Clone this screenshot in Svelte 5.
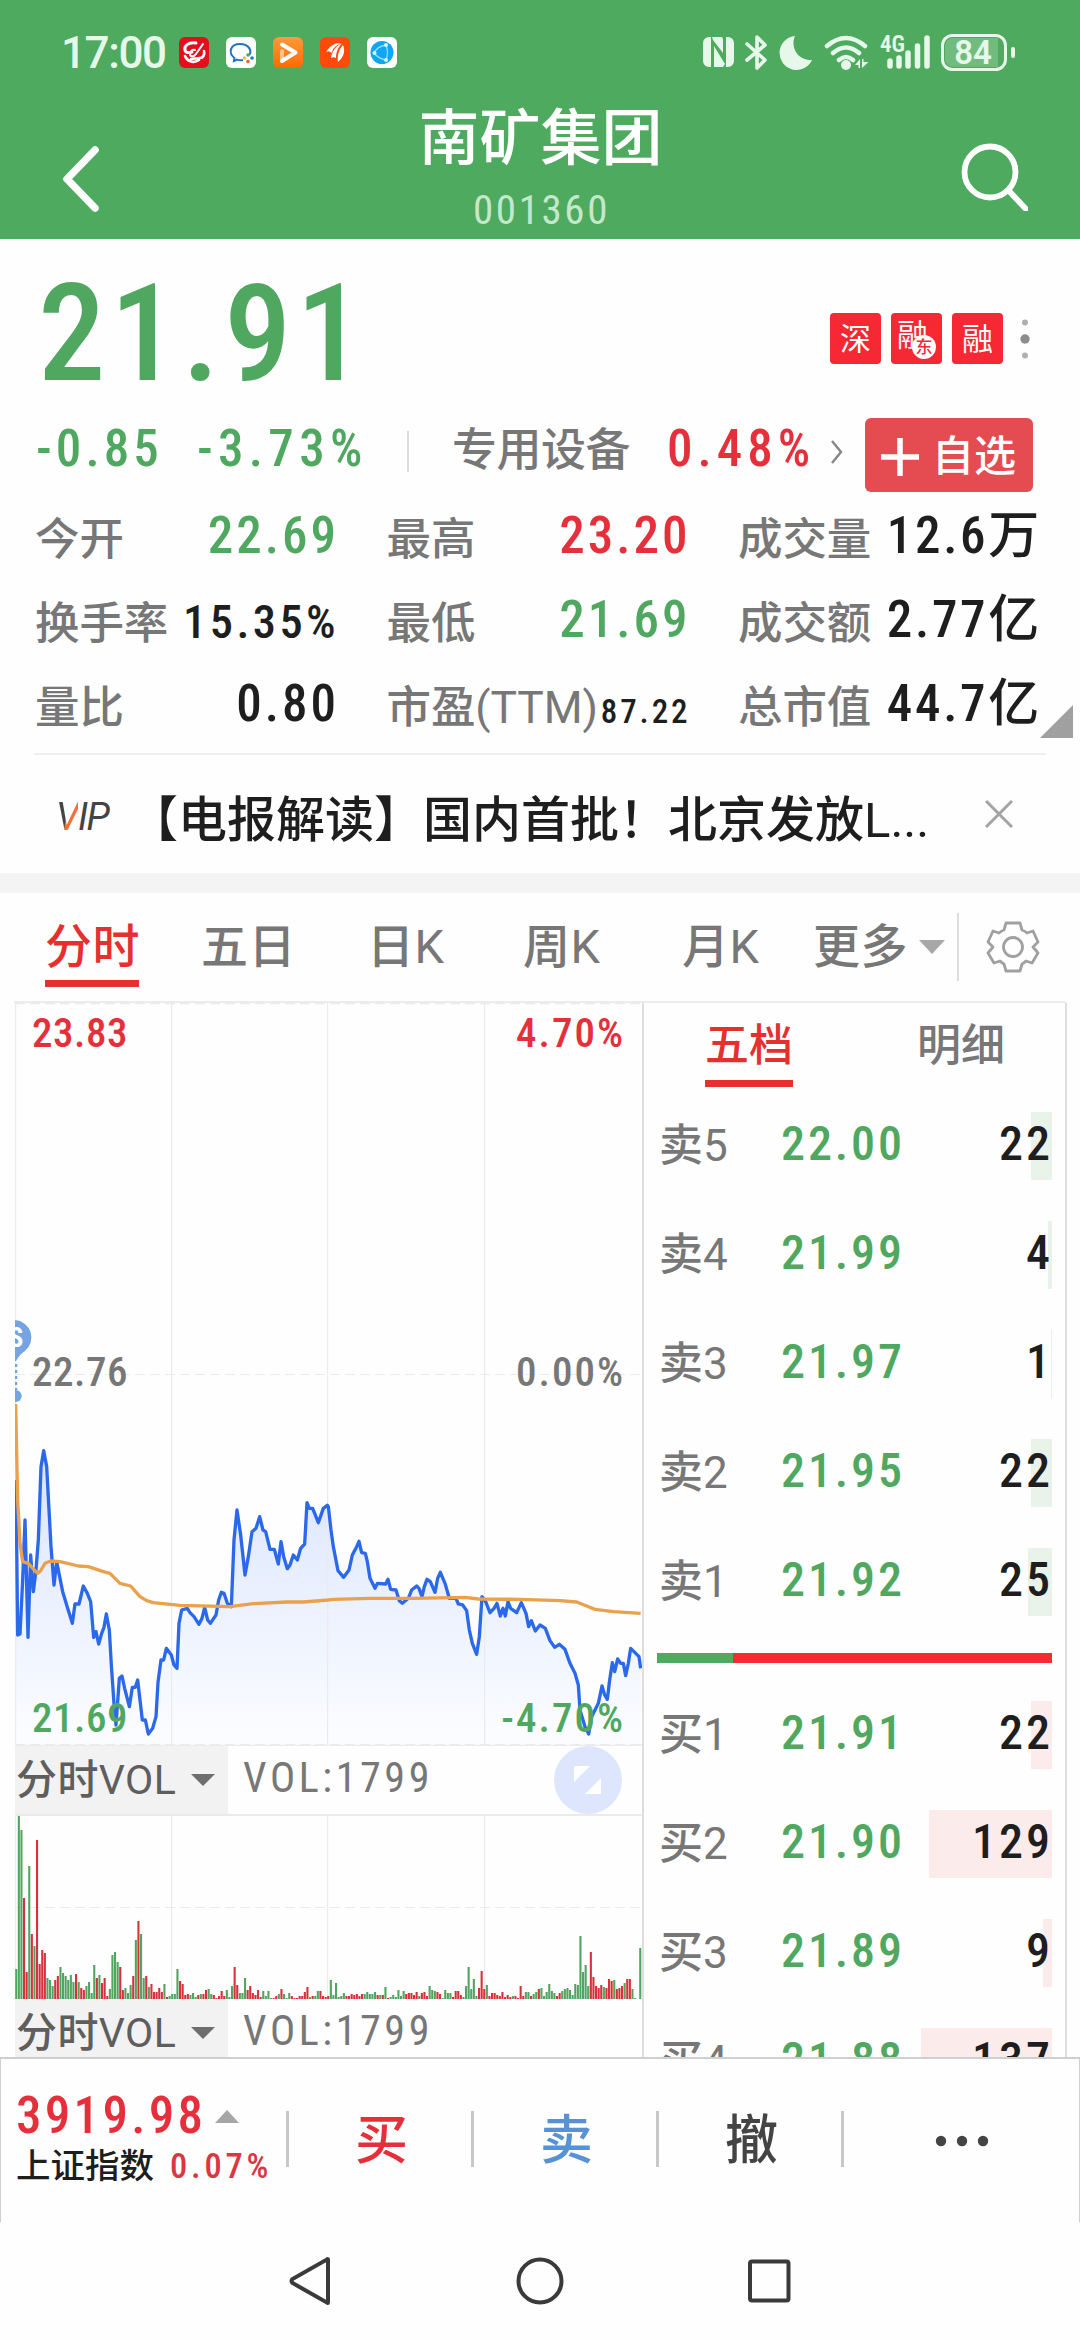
<script lang="ts">
	type Tone = 'up' | 'down' | 'plain';

	interface Stat {
		label: string;
		value: string;
		tone: Tone;
		size?: 'mid' | 'small';
	}

	interface Level {
		name: string;
		price: string;
		volume: number;
	}

	const stats: Stat[] = [
		{ label: '今开', value: '22.69', tone: 'down' },
		{ label: '最高', value: '23.20', tone: 'up' },
		{ label: '成交量', value: '12.6万', tone: 'plain' },
		{ label: '换手率', value: '15.35%', tone: 'plain', size: 'mid' },
		{ label: '最低', value: '21.69', tone: 'down' },
		{ label: '成交额', value: '2.77亿', tone: 'plain' },
		{ label: '量比', value: '0.80', tone: 'plain' },
		{ label: '市盈(TTM)', value: '87.22', tone: 'plain', size: 'small' },
		{ label: '总市值', value: '44.7亿', tone: 'plain' }
	];

	const tabs = ['分时', '五日', '日K', '周K', '月K'];

	const sells: Level[] = [
		{ name: '卖5', price: '22.00', volume: 22 },
		{ name: '卖4', price: '21.99', volume: 4 },
		{ name: '卖3', price: '21.97', volume: 1 },
		{ name: '卖2', price: '21.95', volume: 22 },
		{ name: '卖1', price: '21.92', volume: 25 }
	];

	const buys: Level[] = [
		{ name: '买1', price: '21.91', volume: 22 },
		{ name: '买2', price: '21.90', volume: 129 },
		{ name: '买3', price: '21.89', volume: 9 },
		{ name: '买4', price: '21.88', volume: 137 }
	];

	const depthWidth = (volume: number) => Math.max(1, Math.round(volume * 0.955));

	// chart points, three units per css pixel
	const price =
		'48,600 53,1065 60,1062 68,900 75,720 84,1072 92,825 100,935 108,870 115,780 123,560 131,512 140,560 153,800 162,915 170,845 178,885 188,935 200,975 217,1030 225,972 237,972 250,918 262,940 272,965 281,1072 288,1055 296,1092 305,1060 312,1042 319,1002 328,1050 334,1155 342,1270 348,1335 358,1195 366,1188 374,1225 388,1280 397,1222 406,1222 413,1200 427,1320 436,1320 445,1362 458,1345 468,1310 474,1207 483,1140 491,1140 499,1105 514,1125 522,1155 531,1165 537,1030 545,990 562,985 570,998 582,1010 597,1033 606,1015 614,982 623,1020 631,1030 648,1005 656,960 664,937 672,940 682,970 694,980 702,780 711,690 722,765 735,885 745,830 756,755 768,745 779,710 789,750 797,755 810,808 823,808 835,852 843,785 851,830 862,866 870,855 880,825 892,840 902,805 914,792 921,668 928,685 938,685 955,728 970,685 982,676 985,680 993,750 1000,800 1014,872 1031,892 1047,870 1057,825 1070,800 1077,784 1085,818 1096,820 1102,845 1110,895 1125,925 1132,910 1157,912 1164,898 1172,928 1188,930 1198,962 1207,970 1225,955 1235,930 1250,918 1257,925 1266,950 1273,920 1281,898 1291,905 1305,937 1313,895 1321,877 1335,910 1348,955 1368,955 1375,972 1388,975 1400,992 1408,1050 1417,1090 1430,1123 1438,1070 1446,950 1457,965 1470,998 1482,985 1491,970 1501,1008 1509,985 1516,1008 1524,965 1532,985 1550,998 1564,968 1578,1000 1586,1040 1594,1022 1606,1053 1620,1035 1636,1045 1650,1082 1664,1102 1678,1093 1695,1108 1710,1150 1725,1180 1735,1215 1740,1290 1755,1340 1766,1362 1775,1310 1795,1270 1806,1218 1814,1245 1822,1258 1829,1200 1837,1148 1844,1175 1853,1137 1862,1150 1870,1150 1877,1187 1885,1150 1892,1105 1905,1118 1917,1130 1922,1165';
	const average =
		'47,372 50,520 53,660 60,790 68,845 85,850 100,867 113,880 122,872 135,850 152,843 180,845 235,858 265,860 310,875 330,880 360,910 392,918 420,950 440,962 460,968 540,976 690,980 760,971 860,966 910,966 985,960 1000,958 1110,955 1240,955 1395,952 1435,957 1560,958 1680,962 1730,966 1760,978 1785,988 1840,995 1922,1000';

	// one entry per minute: colour and height
	const minutes =
		'g30 g183 g169 r101 r27 g133 r65 g53 r159 r35 r49 r46 g21 g19 g13 r19 r23 g32 g26 g23 g19 g24 g17 r25 g17 r11 r9 g13 g17 g6 g34 r21 g24 r16 r21 r3 g10 g44 g47 g37 r32 r9 g11 g6 g14 r23 g59 r78 g65 g21 r23 g12 r15 r7 r7 r11 r7 g15 r2 g3 g5 g5 g30 r18 r15 r4 r5 g4 g6 g2 r4 g5 r5 r9 g10 g5 r4 r1 r3 r8 r3 g9 g2 g13 r32 r14 g6 g6 g21 r9 r13 r6 r4 r9 r2 g8 g3 g8 g1 r1 r3 g5 r10 g5 g1 g6 r3 r1 r1 r3 r3 r7 r12 g2 r3 g3 g8 r8 r3 r2 r3 g19 g4 g16 g2 g3 g6 r3 r3 r5 r4 r5 r3 r5 g5 g7 g5 g5 g7 r4 g4 r4 g12 r1 g2 g4 g2 g9 g3 g8 r5 r6 r6 r4 r7 g3 r6 r7 r3 g13 g9 g8 r7 r5 g1 g9 g6 g6 r2 r8 r8 r4 g2 g13 g32 g10 g20 g3 r11 r28 r10 g14 r3 r6 r6 r4 r3 r7 r2 r4 r2 g3 r3 r1 r13 r3 g7 g7 r3 g5 g7 r10 g11 g3 g7 g15 g8 g6 r3 r6 g8 g10 g11 g9 g4 g15 g14 g63 g27 g34 g13 r47 r22 r13 r11 r14 g12 r11 r20 r18 g19 r10 r11 r13 g16 r20 r20 g10 g1 g0 g51';
	const bars = minutes.split(' ').map((m, i) => ({
		x: i * 2.6,
		height: Number(m.slice(1)),
		rise: m[0] === 'r'
	}));
</script>

{#snippet level(row: Level, side: string)}
	<div class="level">
		<span class="level-name">{row.name}</span>
		<span class="level-price">{row.price}</span>
		<span class="level-volume">
			<i class="depth {side}" style="width: {depthWidth(row.volume)}px"></i>
			<b>{row.volume}</b>
		</span>
	</div>
{/snippet}

{#snippet indicator()}
	<div class="picker">
		<span>分时VOL</span>
		<svg width="24" height="12" viewBox="0 0 24 12"><path d="M0 0h24L12 12z" fill="#6e6e6e" /></svg>
	</div>
	<span class="reading">VOL:1799</span>
{/snippet}

<main class="screen">
	<header>
		<div class="status">
			<span class="clock">17:00</span>
			<div class="apps">
				<svg viewBox="0 0 30 31">
					<rect width="30" height="31" rx="6" fill="#e60e1c" />
					<g fill="none" stroke="#fff" stroke-linecap="round">
						<path d="M17 6C9 5 5 9 6 13c.6 3 4 3 7 2" stroke-width="3" />
						<path d="M24 7l-7 10c-2 3-6 3-6 0s3-5 5-4" stroke-width="2" />
						<path d="M25 14c1 4-1 7-4 7-3 1-7 0-9 1M6 19c2 5 8 8 14 4" stroke-width="2.6" />
					</g>
				</svg>
				<svg viewBox="0 0 30 31">
					<rect width="30" height="31" rx="6" fill="#fff" />
					<path d="M17 23c-2 .4-4 .3-6-.4L8 24l.4-3C2 16 4 7 14 7s12 8 9 11" fill="none" stroke="#1d75c3" stroke-width="2" />
					<circle cx="22" cy="18" r="1.8" fill="#4db04a" /><circle cx="26" cy="21" r="1.8" fill="#1d75c3" />
					<circle cx="22" cy="24.500" r="1.800" fill="#f0622d" /><circle cx="18.500" cy="21" r="1.800" fill="#f9c22d" />
				</svg>
				<svg viewBox="0 0 30 31">
					<defs><linearGradient id="play" x1="0" y1="0" x2="0" y2="1"><stop stop-color="#ff9a3c" /><stop offset="1" stop-color="#ff6a00" /></linearGradient></defs>
					<rect width="30" height="31" rx="6" fill="url(#play)" />
					<path d="M9 24V14" stroke="#ffc58e" stroke-width="4" stroke-linecap="round" />
					<path d="M9 7.500l13.500 8L9 24" fill="none" stroke="#fff" stroke-width="4" stroke-linecap="round" stroke-linejoin="round" />
				</svg>
				<svg viewBox="0 0 30 31">
					<rect width="30" height="31" rx="6" fill="#ff4a0b" />
					<path d="M6 15c4-6 8-9 15-9-6 3-9 6-9 10-3-2-4-2-6-1zM11 21c1-7 5-12 11-15-5 6-6 10-6 15-2-1-3-1-5 0zM18 25c-1-6 1-13 5-17 2 5 2 11-5 17z" fill="#fff" />
				</svg>
				<svg viewBox="0 0 30 31">
					<rect width="30" height="31" rx="6" fill="#fff" />
					<circle cx="15" cy="15.500" r="11.500" fill="#10a5f5" />
					<path d="M19 8C13 9 9 12 7 16c3 4 7 6 12 7 2-5 2-10 0-15z" fill="none" stroke="#8fe0ff" stroke-width="1.300" />
					<g fill="#d8f5ff"><circle cx="19" cy="8" r="2" /><circle cx="7.500" cy="16" r="2" /><circle cx="19" cy="23" r="2" /></g>
				</svg>
			</div>
			<svg class="signals" width="314" height="40" viewBox="0 0 314 40" fill="#e6f8e9">
				<path d="M7 5h2v30H7a6 6 0 0 1-6-6V11a6 6 0 0 1 6-6zM10 5h9q2 0 2 3v13L11 8zM24 5h2a6 6 0 0 1 6 6v18a6 6 0 0 1-6 6h-2zM12 14l11 18-2 3H12z" />
				<path d="M45 12l18 16-8 8V5l8 8-18 15" fill="none" stroke="#e6f8e9" stroke-width="3.600" stroke-linejoin="round" stroke-linecap="round" />
				<path d="M93 4A17 17 0 1 0 110 28 17 17 0 0 1 93 4z" />
				<g fill="none" stroke="#e6f8e9" stroke-width="4.500" stroke-linecap="round">
					<path d="M125 14q19-16 38 0M131 21q13-11 26 0M137 28q7-6 14 0" />
				</g>
				<circle cx="144" cy="33" r="5" />
				<path d="M153 33l5-6v9h-1.500v-3zM160 27h1.500v3h5l-6.500 6z" />
				<text x="178" y="20" class="net">4G</text>
				<g stroke="#e6f8e9" stroke-width="5.500" stroke-linecap="round">
					<path d="M188 29v5M197 26v8M206 21v13M215.500 14v20M225 6v28" />
				</g>
				<rect x="240.500" y="3.500" width="63" height="34" rx="10" fill="none" stroke="#e6f8e9" stroke-width="3" />
				<path d="M251 6h45v29h-45a8 8 0 0 1-8-8V14a8 8 0 0 1 8-8z" fill="#71bb7e" />
				<rect x="309" y="15" width="4" height="11" rx="2" />
				<text x="271" y="32" class="charge">84</text>
			</svg>
		</div>
		<div class="title-bar">
			<svg width="44" height="72" viewBox="0 0 44 72"><path d="M36 7L8 36l28 29" fill="none" stroke="#fff" stroke-width="7.500" stroke-linecap="round" stroke-linejoin="round" /></svg>
			<div class="title">
				<h1>南矿集团</h1>
				<span>001360</span>
			</div>
			<svg width="68" height="68" viewBox="0 0 68 68" fill="none" stroke="#fff" stroke-width="5.800" stroke-linecap="round"><circle cx="30" cy="29" r="25.500" /><path d="M49 48l17 18" /></svg>
		</div>
	</header>

	<section class="quote">
		<div class="last">
			<strong>21.91</strong>
			<div class="tags">
				<span>深</span>
				<span class="dual">融<em>东</em></span>
				<span>融</span>
				<svg width="10" height="42" viewBox="0 0 10 42"><circle cx="5" cy="4.500" r="3" fill="#b0b0b0" /><circle cx="5" cy="21" r="4.700" fill="#8c8c8c" /><circle cx="5" cy="37.500" r="3" fill="#b0b0b0" /></svg>
			</div>
		</div>
		<div class="change">
			<span class="num down diff">-0.85</span>
			<span class="num down percent">-3.73%</span>
			<i class="rule"></i>
			<span class="sector">专用设备</span>
			<span class="num up">0.48%</span>
			<svg class="chevron" width="14" height="28" viewBox="0 0 14 28"><path d="M2 3l9 11-9 11" fill="none" stroke="#888" stroke-width="2.500" /></svg>
			<button>
				<svg width="38" height="38" viewBox="0 0 38 38"><path d="M19 0v38M0 19h38" stroke="#fff" stroke-width="5.500" /></svg>
				自选
			</button>
		</div>
		<div class="stats">
			{#each stats as stat}
				<div class="stat">
					<span class="label">{stat.label}</span>
					<span class="value {stat.tone} {stat.size ?? ''}">{stat.value}</span>
				</div>
			{/each}
			<svg class="fold" width="33" height="33" viewBox="0 0 33 33"><path d="M33 0v33H0z" fill="#a0a0a0" /></svg>
		</div>
	</section>

	<section class="news">
		<span class="vip"><i>V</i>IP</span>
		<p>【电报解读】国内首批！北京发放L...</p>
		<svg width="28" height="28" viewBox="0 0 28 28"><path d="M1 1l26 26M27 1L1 27" stroke="#a4a4a4" stroke-width="3" /></svg>
	</section>

	<nav class="tabs">
		{#each tabs as tab, i}
			<span class="tab" class:active={i === 0}>{tab}</span>
		{/each}
		<span class="tab more">更多<svg width="26" height="14" viewBox="0 0 26 14"><path d="M0 0h26L13 14z" fill="#a8a8a8" /></svg></span>
		<svg class="gear" width="54" height="54" viewBox="-27 -27 54 54" fill="none" stroke="#a0a0a0" stroke-width="2.800" stroke-linejoin="round">
			<path d="M-7-24H7L9-17Q12-16 14-14L20-16 25-5 20 0 25 6 19 16 13 14Q11 16 9 17L7 24H-7L-9 17Q-11 16-13 14L-19 16-25 6-20 0-25-5-20-16-14-14Q-12-16-9-17z" />
			<circle r="9.500" />
		</svg>
	</nav>

	<div class="board">
		<div class="charts">
			<div class="trend">
				<svg width="627" height="743" viewBox="0 0 627 743">
					<defs>
						<linearGradient id="fill" x1="0" y1="0" x2="0" y2="1">
							<stop stop-color="#d9e4fd" /><stop offset="1" stop-color="#fcfdff" />
						</linearGradient>
					</defs>
					<g transform="translate(-15 277) scale(.33333)">
						<polygon points="48,1394 {price} 1922,1394" fill="url(#fill)" />
					</g>
					<g stroke="#ebebeb" stroke-width="1.200" fill="none">
						<path d="M.6 0v743M156.600 0v743M312.600 0v743M469.600 0v743" />
						<path d="M0 .6h627M0 371.500h627M0 741.500h627" stroke-dasharray="10 5" />
					</g>
					<g transform="translate(-15 277) scale(.33333)" fill="none" stroke-linejoin="round">
						<polyline points={price} stroke="#2c69ea" stroke-width="10" />
						<polyline points={average} stroke="#e9a14c" stroke-width="10" />
					</g>
					<g fill="#75a4e2">
						<path d="M0 317a17.500 17.500 0 0 1 10 31q-5 3-9 10H0z" />
						<path d="M1 361v26" stroke="#75a4e2" stroke-width="2.500" stroke-dasharray="3 3" />
						<circle cx=".7" cy="393" r="6" />
						<text x="1" y="344" class="mark">S</text>
					</g>
				</svg>
				<div class="scale">
					<div class="up"><span>23.83</span><span>4.70%</span></div>
					<div><span>22.76</span><span>0.00%</span></div>
					<div class="down"><span>21.69</span><span>-4.70%</span></div>
				</div>
			</div>
			<div class="indicator">
				{@render indicator()}
				<svg class="expand" width="68" height="68" viewBox="0 0 68 68"><circle cx="34" cy="34" r="34" fill="#dde6fc" /><path d="M20 20h16L20 36zM47 32v16H31z" fill="#fff" /></svg>
			</div>
			<svg class="volume" width="627" height="183" viewBox="0 0 627 183">
				<g stroke="#ebebeb" stroke-width="1.200">
					<path d="M.6 0v183M156.600 0v183M312.600 0v183M469.600 0v183" />
					<path d="M0 91.500h627" stroke-dasharray="10 5" />
				</g>
				{#each bars as bar}
					<rect x={bar.x + 0.2} y={183 - bar.height} width="2.100" height={bar.height} fill={bar.rise ? '#d9303b' : '#51a560'} />
				{/each}
			</svg>
			<div class="indicator last-indicator">
				{@render indicator()}
			</div>
		</div>

		<div class="book">
			<div class="book-tabs">
				<span class="active">五档</span>
				<span>明细</span>
			</div>
			{#each sells as row}
				{@render level(row, 'sell')}
			{/each}
			<div class="ratio"><i></i></div>
			{#each buys as row}
				{@render level(row, 'buy')}
			{/each}
		</div>
	</div>

	<footer>
		<div class="index">
			<div class="index-value">3919.98<svg width="24" height="13" viewBox="0 0 24 13"><path d="M12 0l12 13H0z" fill="#a6a6a6" /></svg></div>
			<div class="index-name">上证指数<span>0.07%</span></div>
		</div>
		<span class="action buy-action">买</span>
		<span class="action sell-action">卖</span>
		<span class="action">撤</span>
		<span class="action"><svg width="54" height="12" viewBox="0 0 54 12" fill="#444"><circle cx="6" cy="6" r="5.200" /><circle cx="27" cy="6" r="5.200" /><circle cx="48" cy="6" r="5.200" /></svg></span>
	</footer>

	<div class="system-nav">
		<svg width="48" height="52" viewBox="0 0 48 52"><path d="M41 4.500v43q0 1-1 0L5.500 28q-2-2 0-4L40 4.500q1-1 1 0z" /></svg>
		<svg width="48" height="52" viewBox="0 0 48 52"><circle cx="24" cy="26" r="21.500" /></svg>
		<svg width="48" height="52" viewBox="0 0 48 52"><rect x="5" y="6.500" width="38.500" height="39" rx="2" /></svg>
	</div>
</main>

<style>
	:global(body) {
		margin: 0;
		background: #fff;
	}

	.screen {
		width: 1080px;
		height: 2340px;
		overflow: hidden;
		display: flex;
		flex-direction: column;
		background: #fefefe;
		font-family: Roboto, 'Noto Sans CJK SC', sans-serif;
		font-stretch: 82%;
		font-weight: 500;
		color: #777;
	}

	svg {
		flex: none;
		display: block;
	}

	i,
	em {
		font-style: normal;
	}

	.up {
		color: #e52f3b;
	}

	.down {
		color: #50a860;
	}

	.plain {
		color: #1e1e1e;
	}

	header {
		height: 239px;
		background: #4eaa5e;
		flex: none;
	}

	.status {
		height: 72px;
		padding: 32px 0 0 61px;
		box-sizing: border-box;
		display: flex;
	}

	.clock {
		width: 118px;
		margin-top: 1px;
		line-height: 40px;
		font-size: 44px;
		font-stretch: 100%;
		font-weight: 500;
		letter-spacing: -1.4px;
		color: #e6f8e9;
	}

	.apps {
		display: flex;
		gap: 17px;
		padding-top: 5px;
	}

	.apps svg {
		width: 30px;
		height: 31px;
	}

	.signals {
		margin-left: 305px;
	}

	.net {
		font-size: 23px;
		font-weight: 600;
	}

	.charge {
		font-size: 33px;
		font-stretch: 92%;
		font-weight: 600;
		text-anchor: middle;
	}

	.title-bar {
		height: 167px;
		padding: 0 52px 0 59px;
		display: flex;
		justify-content: space-between;
	}

	.title-bar > svg {
		margin-top: 71px;
	}

	.title {
		padding-left: 18px;
		text-align: center;
	}

	h1 {
		margin: 29px 0 0;
		font-size: 61px;
		line-height: 76px;
		font-weight: 500;
		color: #fff;
	}

	.title span {
		display: block;
		margin-top: 12px;
		font-size: 41px;
		line-height: 42px;
		font-weight: 400;
		color: #c4e8ca;
		letter-spacing: 2.6px;
		text-indent: 2px;
	}

	.quote {
		height: 516px;
		flex: none;
		box-sizing: border-box;
		border-bottom: 2px solid #f0f0f0;
		margin: 0 34px;
	}

	.last {
		height: 174px;
		padding-right: 3px;
		display: flex;
		justify-content: space-between;
	}

	.last strong {
		margin: 25px 0 0 4px;
		line-height: 140px;
		font-size: 135px;
		font-weight: 500;
		letter-spacing: 4.5px;
		color: #50a860;
	}

	.tags {
		display: flex;
		gap: 10px;
		margin-top: 74px;
		padding-right: 13px;
	}

	.tags span {
		width: 51px;
		height: 51px;
		border-radius: 4px;
		background: #f52833;
		color: #fff;
		font-size: 31px;
		line-height: 53px;
		font-weight: 400;
		text-align: center;
	}

	.tags svg {
		margin: 5px 0 0 7px;
	}

	.tags .dual {
		position: relative;
		text-indent: -8px;
		line-height: 46px;
	}

	.dual em {
		position: absolute;
		left: 21px;
		top: 22px;
		width: 24px;
		height: 24px;
		border-radius: 50%;
		background: #fff;
		color: #f52833;
		font-size: 17px;
		font-weight: 500;
		line-height: 24px;
		text-indent: 0;
	}

	.change {
		height: 80px;
		display: flex;
		align-items: flex-start;
		white-space: nowrap;
		padding-top: 5px;
		box-sizing: border-box;
	}

	.num {
		margin-top: 6px;
		font-size: 51px;
		line-height: 50px;
		letter-spacing: 5px;
		width: 145px;
	}

	.diff {
		width: 161px;
		margin-left: 2px;
		letter-spacing: 4.1px;
	}

	.percent {
		width: 210px;
		letter-spacing: 5.3px;
	}

	.rule {
		width: 2px;
		height: 41px;
		margin: 13px 43px 0 0;
		background: #ddd;
	}

	.sector {
		width: 215px;
		margin-top: 8px;
		font-size: 45px;
		line-height: 50px;
		letter-spacing: -0.5px;
	}

	.chevron {
		margin: 20px 0 0 18px;
	}

	button {
		width: 168px;
		height: 74px;
		margin: 0 0 0 21px;
		padding: 4px 0 0 16px;
		display: flex;
		align-items: center;
		gap: 13px;
		box-sizing: border-box;
		flex: none;
		border: 0;
		border-radius: 6px;
		background: #e54c51;
		color: #fff;
		font: 500 42px/72px Roboto, 'Noto Sans CJK SC', sans-serif;
		white-space: nowrap;
	}

	.stats {
		position: relative;
		display: grid;
		grid-template-columns: 301px 301px 300px;
		grid-auto-rows: 84px;
		column-gap: 50.5px;
		padding-left: 1px;
		white-space: nowrap;
	}

	.stat {
		display: flex;
		align-items: center;
		justify-content: space-between;
	}

	.label {
		padding-top: 10px;
		font-size: 44.5px;
		line-height: 50px;
		font-stretch: 92%;
		font-weight: 450;
		letter-spacing: -0.1px;
	}

	.value {
		margin-right: -3px;
		padding-top: 2px;
		font-size: 51px;
		line-height: 50px;
		letter-spacing: 3px;
	}

	.stat:nth-child(3n) .value {
		margin-right: -4px;
		letter-spacing: 2.7px;
	}

	.value.mid {
		font-size: 46.5px;
		padding-top: 5px;
		letter-spacing: 3.4px;
	}

	.value.small {
		font-size: 33px;
		padding-top: 18px;
		letter-spacing: 2.9px;
	}

	.fold {
		position: absolute;
		right: -27px;
		top: 212px;
	}

	.news {
		height: 118px;
		flex: none;
		border-bottom: 20px solid #f4f4f4;
		display: flex;
		align-items: center;
		padding: 0 67px 0 56px;
	}

	.vip {
		width: 73px;
		padding-top: 5px;
		font-size: 38px;
		font-style: italic;
		font-stretch: 95%;
		letter-spacing: -1.5px;
		font-weight: 400;
		color: #444;
	}

	.vip i {
		font-style: italic;
		background: linear-gradient(100deg, #444 45%, #f0703c 50%);
		background-clip: text;
		color: transparent;
	}

	.news p {
		flex: 1;
		margin: 2px 0 0;
		font-size: 49px;
		font-stretch: 96%;
		font-weight: 450;
		color: #1e1e1e;
		white-space: nowrap;
	}

	.news svg {
		margin-top: -1px;
	}

	.tabs {
		height: 110px;
		flex: none;
		display: flex;
		align-items: flex-start;
		margin: 0 14px;
		box-sizing: border-box;
		border-bottom: 2px solid #ececec;
	}

	.tab {
		padding: 21px 0 0;
		height: 66px;
		width: 94px;
		font-size: 47px;
		line-height: 66px;
		letter-spacing: 0.4px;
		font-stretch: 92%;
		font-weight: 450;
		margin-left: 62px;
		white-space: nowrap;
	}

	.tab:first-child {
		margin-left: 31px;
	}

	.tab:nth-child(3) {
		margin-left: 72px;
	}

	.tab:nth-child(4) {
		margin-left: 62px;
	}

	.tab:nth-child(5) {
		margin-left: 65px;
	}

	.tab.active {
		color: #e53030;
		border-bottom: 7px solid #e53030;
	}

	.tab.more {
		width: 132px;
		display: flex;
		gap: 11px;
		margin-left: 37px;
		align-items: center;
	}

	.gear {
		box-sizing: content-box;
		margin: 20px 0 0 12px;
		padding: 7px 0 7px 27px;
		border-left: 2px solid #ddd;
	}

	.board {
		height: 1054px;
		flex: none;
		margin: 0 13px 0 15px;
		display: flex;
		overflow: hidden;
	}

	.charts {
		width: 627px;
		border-right: 2px solid #dedede;
	}

	.trend {
		position: relative;
		height: 741px;
		border-bottom: 2px solid #ebebeb;
	}

	.trend svg {
		overflow: hidden;
	}

	.mark {
		fill: #fff;
		font-size: 27px;
		font-weight: 700;
		text-anchor: middle;
	}

	.scale {
		position: absolute;
		inset: 9px 17px 5px 17px;
		display: flex;
		flex-direction: column;
		justify-content: space-between;
		font-size: 41px;
		line-height: 42px;
		letter-spacing: 0.5px;
	}

	.scale div {
		display: flex;
		justify-content: space-between;
	}

	.scale span:last-child {
		letter-spacing: 2px;
	}

	.scale div:nth-child(2) {
		padding-bottom: 7px;
	}

	.indicator {
		position: relative;
		height: 68px;
		display: flex;
		align-items: center;
		border-bottom: 2px solid #ebebeb;
	}

	.picker {
		width: 214px;
		height: 68px;
		margin-left: -1px;
		padding-left: 2px;
		box-sizing: border-box;
		display: flex;
		align-items: center;
		background: #f2f2f2;
		color: #5e5e5e;
		font-size: 41px;
		line-height: 66px;
	}

	.picker span {
		width: 175px;
		font-stretch: 90%;
		font-weight: 450;
		letter-spacing: 0.4px;
	}

	.reading {
		margin-left: 15px;
		font-size: 42px;
		line-height: 63px;
		height: 68px;
		font-weight: 400;
		letter-spacing: 3.6px;
	}

	.expand {
		position: absolute;
		right: 20px;
		top: 0;
	}

	.last-indicator {
		border: 0;
	}

	.book {
		width: 422px;
		border-right: 2px solid #dedede;
	}

	.book-tabs {
		height: 109px;
		display: flex;
		gap: 124px;
		padding-left: 61px;
		box-sizing: border-box;
		font-size: 44px;
		line-height: 66px;
	}

	.book-tabs span {
		height: 78px;
		padding-top: 10px;
		box-sizing: border-box;
	}

	.book-tabs .active {
		height: 84px;
		color: #e53030;
		border-bottom: 7px solid #e53030;
	}

	.level {
		height: 68px;
		margin: 0 13px 41px 15px;
		display: flex;
		align-items: center;
	}

	.level-name {
		width: 122px;
		font-size: 44px;
		font-stretch: 90%;
		font-weight: 450;
		line-height: 50px;
	}

	.level-price {
		width: 139px;
		padding-bottom: 5px;
		font-size: 48px;
		line-height: 50px;
		letter-spacing: 2.9px;
		color: #50a860;
	}

	.level-volume {
		position: relative;
		flex: 1;
		height: 68px;
		text-align: right;
	}

	.level-volume b {
		position: relative;
		margin-right: -1px;
		font-size: 48px;
		line-height: 63px;
		font-weight: 500;
		letter-spacing: 3px;
		color: #1e1e1e;
	}

	.depth {
		position: absolute;
		right: 0;
		top: 0;
		height: 68px;
	}

	.depth.sell {
		background: #e9f3ea;
	}

	.depth.buy {
		background: #fcebeb;
	}

	.ratio {
		height: 10px;
		margin: -4px 13px 38px;
		background: #f42a35;
	}

	.ratio i {
		display: block;
		width: 76px;
		height: 10px;
		background: #4eaa5e;
	}

	footer {
		height: 165px;
		flex: none;
		box-sizing: border-box;
		border: 1px solid #cfcfcf;
		border-width: 2px 1px 0;
		display: flex;
		padding-top: 52px;
	}

	.index {
		width: 285px;
		margin-top: -19px;
		padding-left: 15px;
		box-sizing: border-box;
		white-space: nowrap;
	}

	.index-value {
		display: flex;
		align-items: center;
		gap: 9px;
		font-size: 51px;
		line-height: 48px;
		letter-spacing: 3.3px;
		color: #e52f3b;
	}

	.index-name {
		margin-top: 2px;
		font-size: 34.500px;
		line-height: 48px;
		color: #1e1e1e;
	}

	.index-name span {
		margin-left: 16px;
		color: #d93843;
		letter-spacing: 3.8px;
	}

	.action {
		width: 185px;
		height: 56px;
		box-sizing: border-box;
		border-left: 3px solid #c8c8c8;
		display: flex;
		align-items: center;
		justify-content: center;
		padding: 3px 0 0 3px;
		font-size: 53px;
		line-height: 56px;
		color: #444;
	}

	.action:last-child {
		width: 236px;
	}

	.buy-action {
		color: #e52f3b;
	}

	.sell-action {
		color: #5791d6;
	}

	.system-nav {
		flex: 1;
		display: flex;
		justify-content: center;
		gap: 181px;
		padding-top: 33px;
	}

	.system-nav svg {
		fill: none;
		stroke: #3a3a3a;
		stroke-width: 4;
	}
</style>
